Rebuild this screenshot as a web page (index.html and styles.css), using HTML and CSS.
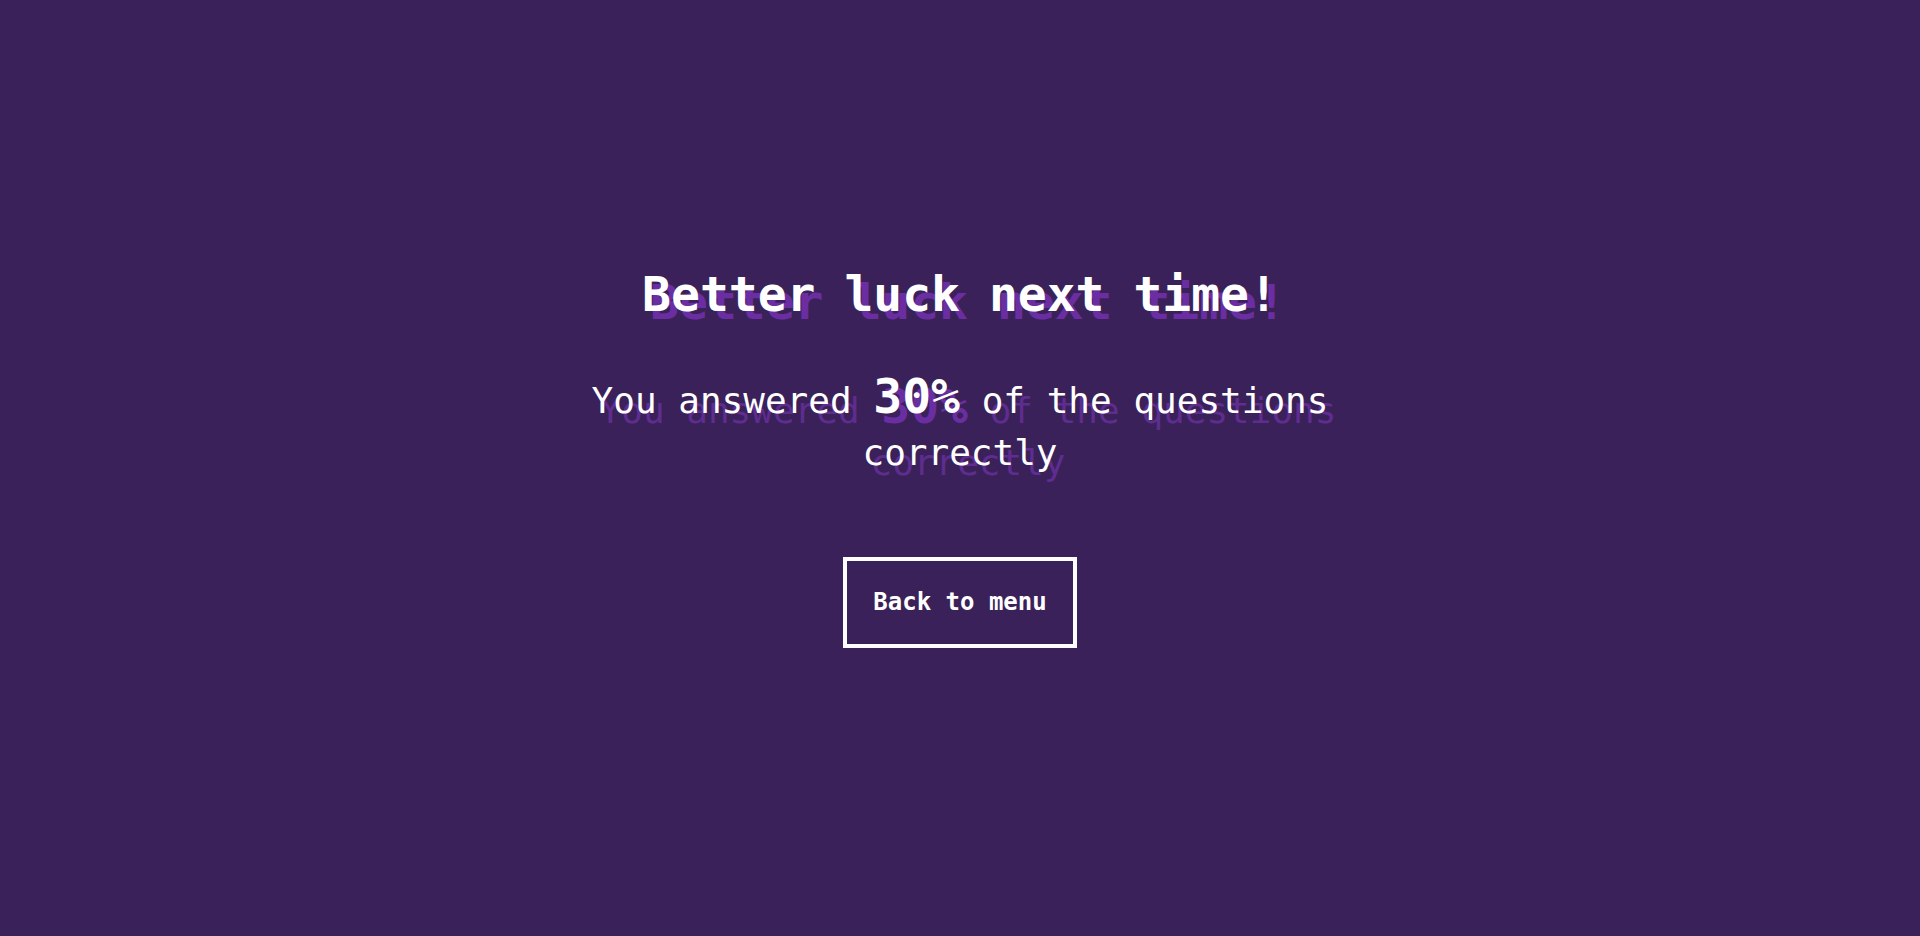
FILE: index.html
```html
<!DOCTYPE html>
<html lang="en">
<head>
<meta charset="utf-8">
<title>Results</title>
<link rel="stylesheet" href="styles.css">
</head>
<body>
<main class="result">
  <h1 class="result-title">Better luck next time!</h1>
  <p class="result-text">You answered <span class="result-score">30%</span> of the questions correctly</p>
  <button class="menu-button" type="button">Back to menu</button>
</main>
</body>
</html>
```
FILE: styles.css
```css
html, body {
  margin: 0;
  padding: 0;
}
body {
  background: #3a2159;
  color: #ffffff;
  font-family: "DejaVu Sans Mono", "Liberation Mono", monospace;
  min-height: 936px;
}
.result {
  display: flex;
  flex-direction: column;
  align-items: center;
  padding-top: 265px;
  text-align: center;
}
.result-title {
  margin: 0;
  font-size: 48px;
  line-height: 58px;
  font-weight: bold;
  text-shadow: 8px 8px 0 #6b2ea2;
}
.result-text {
  margin: 47px 0 0;
  max-width: 780px;
  font-size: 36px;
  line-height: 52px;
  font-weight: normal;
  text-shadow: 8px 10px 0 #5f2c8f;
}
.result-score {
  font-size: 48px;
  font-weight: bold;
  text-shadow: 8px 10px 0 #6b2ea2;
}
.menu-button {
  margin-top: 78px;
  background: transparent;
  color: #ffffff;
  border: 4px solid #ffffff;
  font-family: "DejaVu Sans Mono", "Liberation Mono", monospace;
  font-size: 24px;
  line-height: 31px;
  font-weight: bold;
  padding: 26px 26px;
  cursor: pointer;
}
```
